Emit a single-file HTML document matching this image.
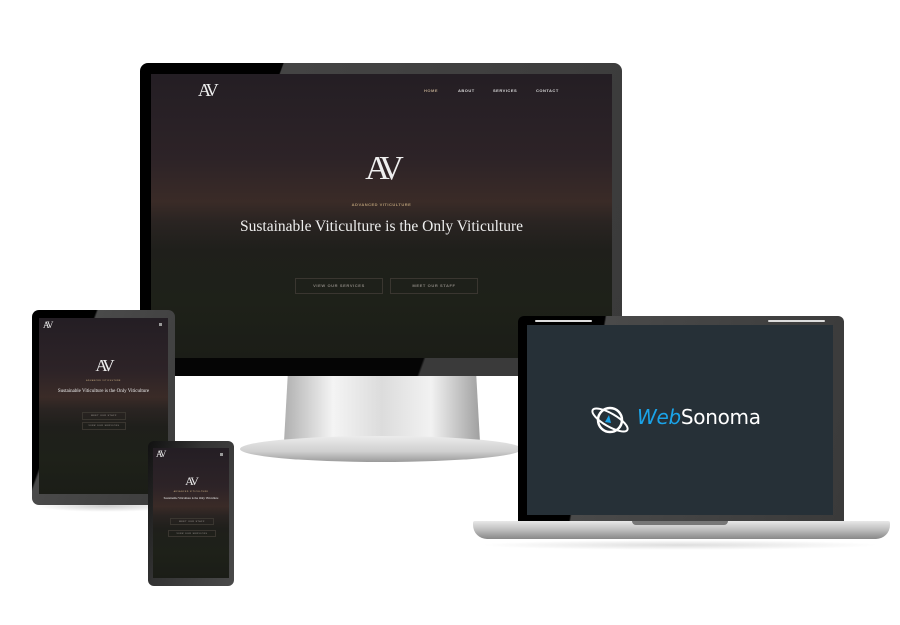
<!DOCTYPE html>
<html><head><meta charset="utf-8"><style>
*{margin:0;padding:0;box-sizing:border-box}
body{width:900px;height:625px;background:#fff;position:relative;overflow:hidden;font-family:"Liberation Sans",sans-serif}
.a{position:absolute}
.scr{background:linear-gradient(180deg,#241e24 0%,#2d2327 30%,#3a2b27 45%,#2a2422 52%,#1f1f1b 62%,#1e2119 80%,#1b1d17 100%)}
.serif{font-family:"Liberation Serif",serif;color:#eee}
.nav{font-size:4px;letter-spacing:.5px;color:#ddd;font-weight:bold}
.btn{border:1px solid #3a3630;color:#8a8580;font-size:4px;letter-spacing:.6px;text-align:center;font-weight:bold}
</style></head><body>
<!-- monitor stand -->
<div class="a" style="left:284px;top:372px;width:196px;height:70px;background:linear-gradient(90deg,#b0b0b0,#f4f4f4 25%,#dcdcdc 50%,#f2f2f2 75%,#a0a0a0);clip-path:polygon(2% 0,98% 0,100% 100%,0 100%)"></div>
<div class="a" style="left:240px;top:436px;width:282px;height:26px;border-radius:50%;background:linear-gradient(180deg,#ececec,#cfcfcf 60%,#9a9a9a)"></div>
<!-- monitor -->
<div class="a" style="left:140px;top:63px;width:482px;height:313px;border-radius:8px;background:linear-gradient(110deg,#000 0,#000 24%,#444 24.2%,#3a3a3a 100%)"></div>
<div class="a" style="left:140px;top:358px;width:482px;height:18px;border-radius:0 0 8px 8px;background:linear-gradient(110deg,#050505 0,#050505 58%,#3a3a3a 58.5%)"></div>
<div class="a scr" style="left:151px;top:74px;width:461px;height:284px">
 <div class="a serif" style="left:47px;top:6px;font-size:18px;letter-spacing:-3px">AV</div>
 <div class="a nav" style="left:273px;top:14px;color:#b8a48a">HOME</div>
 <div class="a nav" style="left:307px;top:14px">ABOUT</div>
 <div class="a nav" style="left:342px;top:14px">SERVICES</div>
 <div class="a nav" style="left:385px;top:14px">CONTACT</div>
 <div class="a serif" style="left:0;width:461px;text-align:center;top:76px;font-size:34px;letter-spacing:-6px">AV</div>
 <div class="a nav" style="left:0;width:461px;text-align:center;top:128px;color:#b49a74">ADVANCED VITICULTURE</div>
 <div class="a serif" style="left:0;width:461px;text-align:center;top:144px;font-size:15.5px">Sustainable Viticulture is the Only Viticulture</div>
 <div class="a btn" style="left:144px;top:204px;width:88px;height:16px;line-height:14px">VIEW OUR SERVICES</div>
 <div class="a btn" style="left:239px;top:204px;width:88px;height:16px;line-height:14px">MEET OUR STAFF</div>
</div>
<!-- tablet -->
<div class="a" style="left:36px;top:500px;width:140px;height:12px;background:radial-gradient(ellipse,#ccc,rgba(255,255,255,0) 70%)"></div>
<div class="a" style="left:32px;top:310px;width:143px;height:195px;border-radius:7px;background:linear-gradient(110deg,#000 0,#000 30%,#4a4a4a 31%,#3c3c3c)"></div>
<div class="a scr" style="left:39px;top:318px;width:129px;height:176px">
 <div class="a serif" style="left:4px;top:2px;font-size:9px;letter-spacing:-1.5px">AV</div>
 <div class="a" style="left:120px;top:5px;width:3px;height:3px;background:#999"></div>
 <div class="a serif" style="left:0;width:129px;text-align:center;top:38px;font-size:17px;letter-spacing:-3px">AV</div>
 <div class="a nav" style="left:0;width:129px;text-align:center;top:62px;font-size:2px;color:#b49a74">ADVANCED VITICULTURE</div>
 <div class="a serif" style="left:0;width:129px;text-align:center;top:71px;font-size:5px">Sustainable Viticulture is the Only Viticulture</div>
 <div class="a btn" style="left:43px;top:94px;width:44px;height:8px;font-size:2px;line-height:7px">MEET OUR STAFF</div>
 <div class="a btn" style="left:43px;top:104px;width:44px;height:8px;font-size:2px;line-height:7px">VIEW OUR SERVICES</div>
</div>
<!-- phone -->
<div class="a" style="left:148px;top:441px;width:86px;height:145px;border-radius:6px;background:linear-gradient(110deg,#111,#333 40%,#4a4a4a)"></div>
<div class="a scr" style="left:153px;top:448px;width:76px;height:130px">
 <div class="a serif" style="left:3px;top:1px;font-size:9px;letter-spacing:-1.5px">AV</div>
 <div class="a" style="left:67px;top:5px;width:3px;height:3px;background:#999"></div>
 <div class="a serif" style="left:0;width:76px;text-align:center;top:26px;font-size:12px;letter-spacing:-2px">AV</div>
 <div class="a nav" style="left:0;width:76px;text-align:center;top:43px;font-size:2px;color:#b49a74">ADVANCED VITICULTURE</div>
 <div class="a serif" style="left:0;width:76px;text-align:center;top:48px;font-size:3px">Sustainable Viticulture is the Only Viticulture</div>
 <div class="a btn" style="left:17px;top:70px;width:44px;height:7px;font-size:2px;line-height:6px">MEET OUR STAFF</div>
 <div class="a btn" style="left:15px;top:82px;width:48px;height:7px;font-size:2px;line-height:6px">VIEW OUR SERVICES</div>
</div>
<!-- laptop -->
<div class="a" style="left:518px;top:316px;width:326px;height:206px;border-radius:6px 6px 0 0;background:linear-gradient(100deg,#000 0,#000 24%,#4a4a4a 24.5%,#3a3a3a)"></div>
<div class="a" style="left:535px;top:320px;width:57px;height:2px;background:#ddd;border-radius:1px"></div>
<div class="a" style="left:768px;top:320px;width:57px;height:2px;background:#ddd;border-radius:1px"></div>
<div class="a" style="left:527px;top:325px;width:306px;height:190px;background:#263037"></div>
<div class="a" style="left:473px;top:521px;width:417px;height:18px;border-radius:2px 2px 14px 14px;background:linear-gradient(180deg,#e8e8e8,#bdbdbd 50%,#888)"></div>
<div class="a" style="left:632px;top:521px;width:96px;height:4px;background:#777;border-radius:0 0 6px 6px"></div>
<div class="a" style="left:480px;top:540px;width:400px;height:10px;background:radial-gradient(ellipse,#ddd,rgba(255,255,255,0) 70%)"></div>
<svg class="a" style="left:589px;top:401px" width="46" height="38" viewBox="0 0 46 38">
 <circle cx="21" cy="19" r="12" fill="none" stroke="#fff" stroke-width="2.5"/>
 <ellipse cx="21" cy="19" rx="20" ry="6.5" transform="rotate(30 21 19)" fill="none" stroke="#fff" stroke-width="2"/>
 <path d="M16 21 L20 14 L22 22 Z" fill="#1aa3e8"/>
</svg>
<div class="a" style="left:637px;top:405px;font-size:20px;color:#fff;font-family:'DejaVu Sans',sans-serif;letter-spacing:-0.3px"><span style="color:#1aa3e8;font-style:italic">Web</span>Sonoma</div>
</body></html>
